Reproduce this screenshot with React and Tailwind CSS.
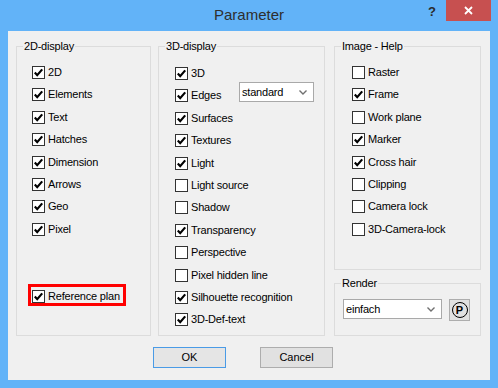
import React from 'react';

const font = "font-['Liberation_Sans',Arial,sans-serif]";

function Box({ checked }) {
  return (
    <span className="flex h-[13px] w-[13px] shrink-0 items-center justify-center border border-[#333333] bg-white">
      {checked && (
        <svg width="11" height="11" viewBox="0 0 11 11">
          <path d="M1.8 5.6 L4.2 8.2 L9.2 2.4" stroke="#000" strokeWidth="2.2" fill="none" />
        </svg>
      )}
    </span>
  );
}

function Row({ label, checked, children }) {
  return (
    <div className="flex h-[13px] items-center gap-[3px]">
      <Box checked={checked} />
      <span className="whitespace-nowrap text-[11px] leading-[13px] tracking-[-0.2px] text-black">{label}</span>
      {children}
    </div>
  );
}

function Select({ value, className }) {
  return (
    <div className={`flex h-[20px] items-center justify-between border border-[#a9a9a9] bg-white pl-[2px] pr-[6px] ${className}`}>
      <span className="text-[11px] tracking-[-0.2px] text-black">{value}</span>
      <svg width="8" height="5" viewBox="0 0 8 5">
        <path d="M0.5 0.5 L4 4 L7.5 0.5" stroke="#707070" strokeWidth="1.4" fill="none" />
      </svg>
    </div>
  );
}

function Group({ title, className, children }) {
  return (
    <fieldset className={`border border-[#dcdcdc] ${className}`}>
      <legend className="ml-[6px] px-[1px] text-[11px] leading-[13px] tracking-[-0.2px] text-black">{title}</legend>
      {children}
    </fieldset>
  );
}

export default function App() {
  return (
    <div className={`flex h-[388px] w-[498px] flex-col bg-[#62b3f8] ${font}`}>
      <div className="grid h-[31px] grid-cols-[1fr_auto_1fr]">
        <div />
        <div className="flex items-center text-[15px] text-[#2e2e2e]">Parameter</div>
        <div className="flex items-start justify-end">
          <span className="mr-[10px] mt-[4px] text-[13px] font-bold leading-[16px] text-[#2b2b2b]">?</span>
          <div className="mr-[7px] flex h-[21px] w-[45px] items-center justify-center bg-[#c75050]">
            <svg width="9" height="9" viewBox="0 0 9 9">
              <path d="M1 1 L8 8 M8 1 L1 8" stroke="#fff" strokeWidth="1.8" />
            </svg>
          </div>
        </div>
      </div>

      <div className="mx-[8px] flex h-[349px] flex-col bg-[#f0f0f0] pl-[8px] pt-[9px]">
        <div className="flex h-[296px]">
          <Group title="2D-display" className="w-[135px]">
            <div className="flex flex-col gap-[9.4px] pl-[15px] pt-[13px]">
              <Row label="2D" checked />
              <Row label="Elements" checked />
              <Row label="Text" checked />
              <Row label="Hatches" checked />
              <Row label="Dimension" checked />
              <Row label="Arrows" checked />
              <Row label="Geo" checked />
              <Row label="Pixel" checked />
              <div className="-ml-[4px] mt-[39px] h-[22px] w-[98px] border-[3px] border-[#ff0000] pl-[1px] pt-[3px]">
                <Row label="Reference plan" checked />
              </div>
            </div>
          </Group>

          <Group title="3D-display" className="ml-[7px] w-[167px]">
            <div className="flex flex-col gap-[9.4px] pl-[16px] pt-[14px]">
              <Row label="3D" checked />
              <div className="flex h-[13px] items-start">
                <div className="w-[64px]">
                  <Row label="Edges" checked />
                </div>
                <Select value="standard" className="-mt-[7px] w-[75px]" />
              </div>
              <Row label="Surfaces" checked />
              <Row label="Textures" checked />
              <Row label="Light" checked />
              <Row label="Light source" />
              <Row label="Shadow" />
              <Row label="Transparency" checked />
              <Row label="Perspective" />
              <Row label="Pixel hidden line" />
              <Row label="Silhouette recognition" checked />
              <Row label="3D-Def-text" checked />
            </div>
          </Group>

          <div className="ml-[9px] flex w-[147px] flex-col">
            <Group title="Image - Help" className="h-[230px]">
              <div className="flex flex-col gap-[9.4px] pl-[17px] pt-[13px]">
                <Row label="Raster" />
                <Row label="Frame" checked />
                <Row label="Work plane" />
                <Row label="Marker" checked />
                <Row label="Cross hair" checked />
                <Row label="Clipping" />
                <Row label="Camera lock" />
                <Row label="3D-Camera-lock" />
              </div>
            </Group>
            <Group title="Render" className="mt-[7px] h-[59px]">
              <div className="flex items-start gap-[7px] pl-[8px] pt-[9px]">
                <Select value="einfach" className="w-[99px]" />
                <div className="flex h-[22px] w-[21px] items-center justify-center border border-[#adadad] bg-[#e1e1e1]">
                  <span className="flex h-[16px] w-[16px] items-center justify-center rounded-full border-[1.5px] border-black text-[11px] font-bold leading-none text-black">
                    P
                  </span>
                </div>
              </div>
            </Group>
          </div>
        </div>

        <div className="mt-[11px] flex gap-[34px] pl-[137px]">
          <div className="flex h-[21px] w-[73px] items-center justify-center border border-[#4a9be6] bg-[#e5e5e5] text-[11px] text-black">
            OK
          </div>
          <div className="flex h-[21px] w-[73px] items-center justify-center border border-[#adadad] bg-[#e1e1e1] text-[11px] text-black">
            Cancel
          </div>
        </div>
      </div>
    </div>
  );
}
